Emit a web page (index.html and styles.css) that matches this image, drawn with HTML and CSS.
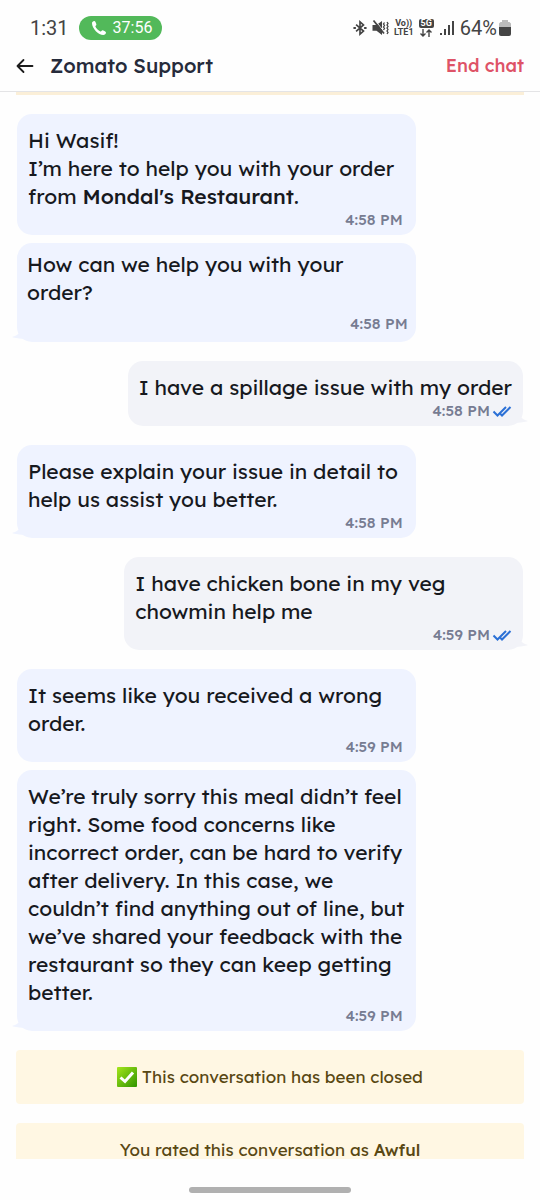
FILE: index.html
```html
<!DOCTYPE html>
<html lang="en">
<head>
<meta charset="utf-8">
<meta name="viewport" content="width=device-width, initial-scale=1">
<title>Zomato Support</title>
<link rel="stylesheet" href="styles.css">
</head>
<body>
<div class="status">
  <span class="clock">1:31</span>
  <span class="call">
    <svg width="16" height="16" viewBox="0 0 16 16" fill="#fff"><path d="M1 3.200C1 1.800 2.400.8 3.400 1c.6.1 1 .8 1.400 1.700.4.9.8 1.600.5 2.200-.3.6-1 .9-.9 1.500.4 1.500 3 4.200 5 5 .7.2 1.100-.7 1.700-1 .6-.3 1.300 0 2.200.5.900.5 1.700.9 1.700 1.600 0 1.300-1.300 2.500-2.700 2.500C7.500 15 1 8.500 1 3.200z"/></svg>
    <span>37:56</span>
  </span>
  <span class="indicators">
    <svg width="14" height="16" viewBox="0 0 16 18" fill="none" stroke="#444" stroke-width="1.900"><path d="M3.500 5.200 12 12.500 8 16V2l4 3.500-8.500 7.300"/><path d="M.5 9h2.800M12.700 9h2.800" stroke-width="2.400"/></svg>
    <svg width="17" height="18" viewBox="0 0 17 18"><path d="M.5 6h4L10 2v14l-5.500-4.200h-4z" fill="#444"/><path d="M3.400 2l9 11" stroke="#fefefe" stroke-width="1"/><path d="M1.500 1.500l10.500 13" stroke="#444" stroke-width="1.800"/><path d="M12.500 3.500l-1 1.500 1 1.500-1 1.500 1 1.500-1 1.500M15 3l1 1.500L15 6l1 1.500L15 9l1 1.500-1 1.500 1 1.500-1 1.500" fill="none" stroke="#444" stroke-width="1.300"/></svg>
    <span class="volte"><span>Vo))</span><span>LTE1</span></span>
    <span class="network"><span class="network-tag">5G</span><svg width="12" height="8" viewBox="0 0 12 8" fill="none" stroke="#444" stroke-width="1.400"><path d="M3 0v7M.5 4.500 3 7l2.500-2.500M9 8V1M6.500 3.500 9 1l2.500 2.500"/></svg></span>
    <svg width="16" height="16" viewBox="0 0 16 16" fill="#444"><path d="M1 13h2v2H1zM5 9h2v6H5zM9 5h2v10H9zM13 1h2v14h-2z"/></svg>
    <span class="level">64%</span>
    <svg width="12" height="16" viewBox="0 0 12 16"><path d="M3 0h6v2h1.500L12 3.500V8H0V3.500L1.500 2H3z" fill="#bbb"/><path d="M0 7h12v7q0 2-2 2H2q-2 0-2-2z" fill="#444"/></svg>
  </span>
</div>
<header class="header">
  <button class="back" aria-label="Back"><svg width="18" height="16" viewBox="0 0 18 16" fill="none" stroke="#1c1c1c" stroke-width="1.800" stroke-linecap="round" stroke-linejoin="round"><path d="M16.500 8h-15M7.500 2l-6 6 6 6"/></svg></button>
  <h1 class="title">Zomato Support</h1>
  <button class="end">End chat</button>
</header>
<main class="chat">
  <div class="notice-edge"></div>
  <section class="group">
    <article class="bubble agent"><p>Hi Wasif!<br>I’m here to help you with your order<br>from <b>Mondal's Restaurant</b>.</p><div class="meta"><time>4:58 PM</time></div></article>
    <article class="bubble agent prompt"><p>How can we help you with your<br>order?</p><div class="meta"><time>4:58 PM</time></div>
      <svg class="tail-mark" width="12" height="8" viewBox="0 0 12 8"><path d="M8 0Q5 4 0 5q2 1 12 2V0z"/></svg></article>
  </section>
  <article class="bubble user"><p>I have a spillage issue with my order</p><div class="meta"><time>4:58 PM</time><svg class="read" width="20" height="12" viewBox="0 0 20 12"><path d="M1.500 6.500 5.500 10.500 14 2M8.500 9l1.500 1.500L18.500 2"/></svg></div>
    <svg class="tail-mark" width="12" height="8" viewBox="0 0 12 8"><path d="M4 0Q7 4 12 5q-2 1-12 2V0z"/></svg></article>
  <article class="bubble agent"><p>Please explain your issue in detail to<br>help us assist you better.</p><div class="meta"><time>4:58 PM</time></div>
    <svg class="tail-mark" width="12" height="8" viewBox="0 0 12 8"><path d="M8 0Q5 4 0 5q2 1 12 2V0z"/></svg></article>
  <article class="bubble user full"><p>I have chicken bone in my veg<br>chowmin help me</p><div class="meta"><time>4:59 PM</time><svg class="read" width="20" height="12" viewBox="0 0 20 12"><path d="M1.500 6.500 5.500 10.500 14 2M8.500 9l1.500 1.500L18.500 2"/></svg></div>
    <svg class="tail-mark" width="12" height="8" viewBox="0 0 12 8"><path d="M4 0Q7 4 12 5q-2 1-12 2V0z"/></svg></article>
  <section class="group">
    <article class="bubble agent"><p>It seems like you received a wrong<br>order.</p><div class="meta"><time>4:59 PM</time></div></article>
    <article class="bubble agent"><p>We’re truly sorry this meal didn’t feel<br>right. Some food concerns like<br>incorrect order, can be hard to verify<br>after delivery. In this case, we<br>couldn’t find anything out of line, but<br>we’ve shared your feedback with the<br>restaurant so they can keep getting<br>better.</p><div class="meta"><time>4:59 PM</time></div>
      <svg class="tail-mark" width="12" height="8" viewBox="0 0 12 8"><path d="M8 0Q5 4 0 5q2 1 12 2V0z"/></svg></article>
  </section>
  <div class="notice"><svg width="20" height="20" viewBox="0 0 20 20"><defs><linearGradient id="g" x1="0" y1="0" x2="1" y2="1"><stop offset="0" stop-color="#a5e61c"/><stop offset="1" stop-color="#2f9400"/></linearGradient></defs><rect width="20" height="20" rx="1" fill="url(#g)"/><path d="M3.500 10.500 8 14.500 16 5.500" fill="none" stroke="#fff" stroke-width="3"/></svg><span>This conversation has been closed</span></div>
  <div class="notice"><span>You rated this conversation as <b>Awful</b></span></div>
</main>
<footer class="gesture"><div class="pill"></div></footer>
</body>
</html>
```
FILE: styles.css
```css
* { box-sizing: border-box; }
body {
  margin: 0;
  height: 100vh;
  display: flex;
  flex-direction: column;
  overflow: hidden;
  background: #fefefe;
  color: #17191e;
  font-family: Lexend, Inter, sans-serif;
}
p, h1 { margin: 0; }
button { border: 0; padding: 0; background: none; font: inherit; }
svg { display: block; flex: none; }
b { font-weight: 500; }

.status {
  flex: none;
  display: flex;
  align-items: center;
  height: 40px;
  padding: 16px 29px 0 30px;
  color: #444;
  font: 20px/24px Roboto, sans-serif;
}
.call {
  display: flex;
  align-items: center;
  gap: 6px;
  height: 24px;
  margin-left: 10px;
  padding: 0 10px 0 12px;
  border-radius: 12px;
  background: #52b95a;
  color: #fff;
  font-size: 16px;
}
.indicators { display: flex; align-items: center; gap: 5px; margin-left: auto; }
.volte { display: flex; flex-direction: column; align-items: center; font: 700 9px/9px Roboto, sans-serif; }
.network { display: flex; flex-direction: column; align-items: center; gap: 1px; }
.network-tag { padding: 0 2px; border-radius: 2px; background: #444; color: #fff; font: 700 9px/9px Roboto, sans-serif; }
.level { margin-right: -3px; }

.header {
  flex: none;
  display: flex;
  align-items: center;
  height: 52px;
  padding: 0 16px;
  border-bottom: 1px solid #e4e4e6;
}
.title { margin-left: 16px; color: #262b3b; font-size: 20px; font-weight: 500; line-height: 28px; }
.end { margin-left: auto; color: #de5367; font-size: 18px; font-weight: 500; line-height: 28px; }

.chat {
  flex: 1;
  min-height: 0;
  overflow: hidden;
  display: flex;
  flex-direction: column;
  gap: 19px;
  padding: 0 16px;
}
.chat > * { flex: none; }
.notice-edge { height: 3px; background: #fbefd8; }
.group { display: flex; flex-direction: column; gap: 8px; }

.bubble {
  position: relative;
  padding: 12px 11px 5px;
  border-radius: 15px;
  font-size: 21px;
  font-weight: 370;
  line-height: 28px;
}
.bubble p { white-space: nowrap; }
.agent { width: 78.5%; margin-left: 1px; background: #eff3ff; }
.user { align-self: flex-end; margin-right: 1px; background: #f2f3f8; }
.full { width: 78.5%; }
.meta {
  display: flex;
  justify-content: flex-end;
  align-items: center;
  gap: 2px;
  color: #777c92;
  font-size: 15px;
  font-weight: 500;
  line-height: 20px;
}
.agent .meta { padding-right: 2px; }
.agent.prompt { padding: 7px 8px 8px 10px; }
.prompt.agent .meta { margin-top: 8px; padding-right: 0; }
.read { fill: none; stroke: #2b70d6; stroke-width: 2; }
.tail-mark { position: absolute; bottom: 2px; }
.agent .tail-mark { left: -5px; fill: #eff3ff; }
.user .tail-mark { right: -5px; fill: #f2f3f8; }

.notice {
  display: flex;
  justify-content: center;
  align-items: center;
  gap: 5px;
  height: 54px;
  border-radius: 4px;
  background: #fff7e3;
  color: #594813;
  font-size: 17px;
  font-weight: 400;
  line-height: 20px;
}
.gesture { flex: none; display: flex; justify-content: center; height: 41px; padding-top: 28px; }
.pill { width: 30%; height: 6px; border-radius: 3px; background: #b0b0b0; }
```
